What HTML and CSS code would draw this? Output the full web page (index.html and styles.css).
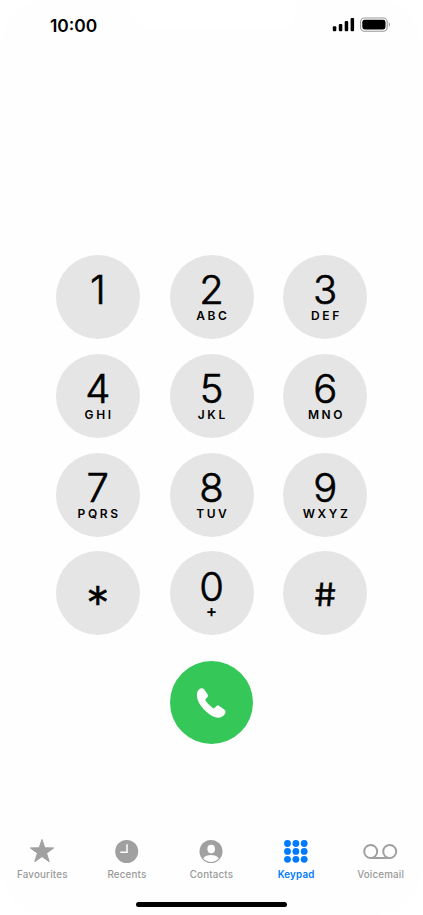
FILE: index.html
```html
<!DOCTYPE html>
<html lang="en">
<head>
<meta charset="utf-8">
<title>Keypad</title>
<link rel="stylesheet" href="styles.css">
</head>
<body>
<main class="phone">
  <header class="status">
    <span class="time">10:00</span>
    <span class="notch"></span>
    <svg class="signals" width="60" height="16" viewBox="0 0 60 16">
      <rect x="0.8" y="9.2" width="3.5" height="5.1" rx="1"/>
      <rect x="6.8" y="7" width="3.5" height="7.3" rx="1"/>
      <rect x="12.7" y="4" width="3.5" height="10.3" rx="1"/>
      <rect x="18.6" y="1" width="3.5" height="13.3" rx="1"/>
      <rect class="battery-shell" x="28.6" y="1" width="26.6" height="13.2" rx="4"/>
      <rect x="30.3" y="2.8" width="23.2" height="9.7" rx="2.4"/>
      <path class="battery-tip" d="M56.8 5.3c1.5.8 1.5 3.8 0 4.6z"/>
    </svg>
  </header>

  <section class="keypad">
    <button class="key"><span class="digit">1</span></button>
    <button class="key"><span class="digit">2</span><span class="letters">ABC</span></button>
    <button class="key"><span class="digit">3</span><span class="letters">DEF</span></button>
    <button class="key"><span class="digit">4</span><span class="letters">GHI</span></button>
    <button class="key"><span class="digit">5</span><span class="letters">JKL</span></button>
    <button class="key"><span class="digit">6</span><span class="letters">MNO</span></button>
    <button class="key"><span class="digit">7</span><span class="letters">PQRS</span></button>
    <button class="key"><span class="digit">8</span><span class="letters">TUV</span></button>
    <button class="key"><span class="digit">9</span><span class="letters">WXYZ</span></button>
    <button class="key"><span class="star">*</span></button>
    <button class="key"><span class="digit zero">0</span><span class="plus">+</span></button>
    <button class="key"><span class="hash">#</span></button>
  </section>

  <button class="call" aria-label="Call">
    <svg width="32" height="32" viewBox="0 0 32 32">
      <path d="M3.2 2.3C4.8.9 7 1 8.2 2.6l3.3 4.6c.8 1.2.6 2.3-.4 3.3l-1.2 1.2c-.7.7-.7 1.2-.3 1.9 1.9 3 4.3 5.3 7.2 7.3.7.5 1.3.4 1.9-.2l1.3-1.3c.9-.9 2.1-1.1 3.2-.3l5 3.4c1.7 1.2 1.8 3.2.5 4.8-1.7 2.2-3.8 3.4-6.7 3.4-3.3 0-7.1-2-11.3-5.7C5.3 20.3 1 14.2.9 8.7.9 6 1.5 3.8 3.2 2.3z"/>
    </svg>
  </button>

  <nav class="tabs">
    <a class="tab">
      <svg width="28" height="26" viewBox="0 0 28 26"><path class="star-shape" d="M14 1.5l2.8 8.3 8.9.1-7.1 5.3 2.6 8.5-7.2-5.1-7.2 5.1 2.6-8.5-7.1-5.3 8.9-.1z"/></svg>
      <span>Favourites</span>
    </a>
    <a class="tab">
      <svg width="28" height="26" viewBox="0 0 28 26"><circle cx="13.7" cy="13.5" r="11.5"/><path class="hands" d="M14 6.2v8H7.3"/></svg>
      <span>Recents</span>
    </a>
    <a class="tab">
      <svg width="28" height="26" viewBox="0 0 28 26"><circle cx="14" cy="13.5" r="11.5"/><ellipse class="cut" cx="14.2" cy="11" rx="3.8" ry="4.2"/><path class="cut" d="M6.3 20.5c1.5-2.4 4.5-3.4 7.7-3.4s6.2 1 7.7 3.4c-2 2.2-4.7 3.4-7.7 3.4s-5.7-1.2-7.7-3.4z"/></svg>
      <span>Contacts</span>
    </a>
    <a class="tab active">
      <svg width="28" height="26" viewBox="0 0 28 26">
        <circle cx="5.5" cy="5.5" r="3.4"/><circle cx="13.9" cy="5.5" r="3.4"/><circle cx="22.2" cy="5.5" r="3.4"/>
        <circle cx="5.5" cy="13.4" r="3.4"/><circle cx="13.9" cy="13.4" r="3.4"/><circle cx="22.2" cy="13.4" r="3.4"/>
        <circle cx="5.5" cy="21.3" r="3.4"/><circle cx="13.9" cy="21.3" r="3.4"/><circle cx="22.2" cy="21.3" r="3.4"/>
      </svg>
      <span>Keypad</span>
    </a>
    <a class="tab">
      <svg width="36" height="26" viewBox="0 0 36 26"><g class="reels"><circle cx="7.7" cy="13.5" r="6.5"/><circle cx="26.7" cy="13.5" r="6.5"/><path d="M7.7 20h19"/></g></svg>
      <span>Voicemail</span>
    </a>
  </nav>
  <div class="home-bar"></div>
</main>
</body>
</html>
```

FILE: styles.css
```css
* { box-sizing: border-box; }
body { margin: 0; background: #fff; font-family: Inter, "Liberation Sans", sans-serif; }
button { border: 0; padding: 0; font: inherit; color: inherit; }
.phone {
  width: 423px;
  height: 915px;
  display: flex;
  flex-direction: column;
  align-items: center;
  background: #fefefe;
  border-radius: 48px;
  overflow: hidden;
  color: #000;
}
.status {
  width: 100%;
  height: 255px;
  padding: 0 31px 0 50px;
  display: flex;
  justify-content: space-between;
  align-items: flex-start;
  flex: none;
}
.time { margin-top: 15px; width: 60px; font-size: 17.4px; line-height: 22px; font-weight: 600; }
.notch { width: 162px; height: 30px; margin-right: 14px; background: #fff; border-radius: 0 0 20px 20px; }
.signals { margin-top: 17px; }
.battery-shell { fill: none; stroke: #999; stroke-width: 1.1; }
.battery-tip { fill: #999; }
.keypad {
  display: grid;
  grid-template-columns: repeat(3, 84px);
  grid-auto-rows: 84px;
  column-gap: 29.7px;
  row-gap: 14.8px;
}
.key {
  display: flex;
  flex-direction: column;
  align-items: center;
  justify-content: flex-start;
  padding-top: 15px;
  border-radius: 50%;
  background: #e5e5e5;
}
.digit { font-size: 40px; line-height: 40px; font-weight: 300; -webkit-text-stroke: .6px #000; }
.zero { margin-top: .7px; }
.letters { font-size: 12px; line-height: 12px; font-weight: 600; letter-spacing: 2.6px; margin-right: -2.6px; }
.plus { font-size: 17px; line-height: 12px; font-weight: 600; margin-top: -2.3px; }
.star { font-size: 46px; line-height: 44px; margin-top: 14.2px; font-weight: 300; -webkit-text-stroke: .7px #000; }
.hash { font-size: 32px; line-height: 32px; margin-top: 12.7px; transform: skewX(5deg) scaleX(1.08); -webkit-text-stroke: .3px #000; }
.call {
  width: 83px;
  height: 83px;
  margin-top: 25.6px;
  flex: none;
  display: flex;
  align-items: center;
  justify-content: center;
  border-radius: 50%;
  background: #36c759;
  fill: #fff;
}
.call svg { margin-top: 1px; }
.tabs {
  width: 100%;
  margin-top: 94px;
  display: grid;
  grid-template-columns: repeat(5, 84.6px);
  color: #999;
  fill: #a0a0a0;
}
.tab {
  display: flex;
  flex-direction: column;
  align-items: center;
  gap: 5px;
  font-size: 9.8px;
  line-height: 12px;
  font-weight: 500;
  letter-spacing: .17px;
}
.active { color: #007aff; fill: #007aff; font-weight: 600; }
.star-shape { stroke: #a0a0a0; stroke-linejoin: round; }
.hands { fill: none; stroke: #fefefe; stroke-width: 1.5; }
.cut { fill: #fefefe; }
.reels { fill: none; stroke: #a0a0a0; stroke-width: 2; }
.home-bar { width: 151px; height: 5px; margin-top: 21px; flex: none; border-radius: 3px; background: #000; }
```
